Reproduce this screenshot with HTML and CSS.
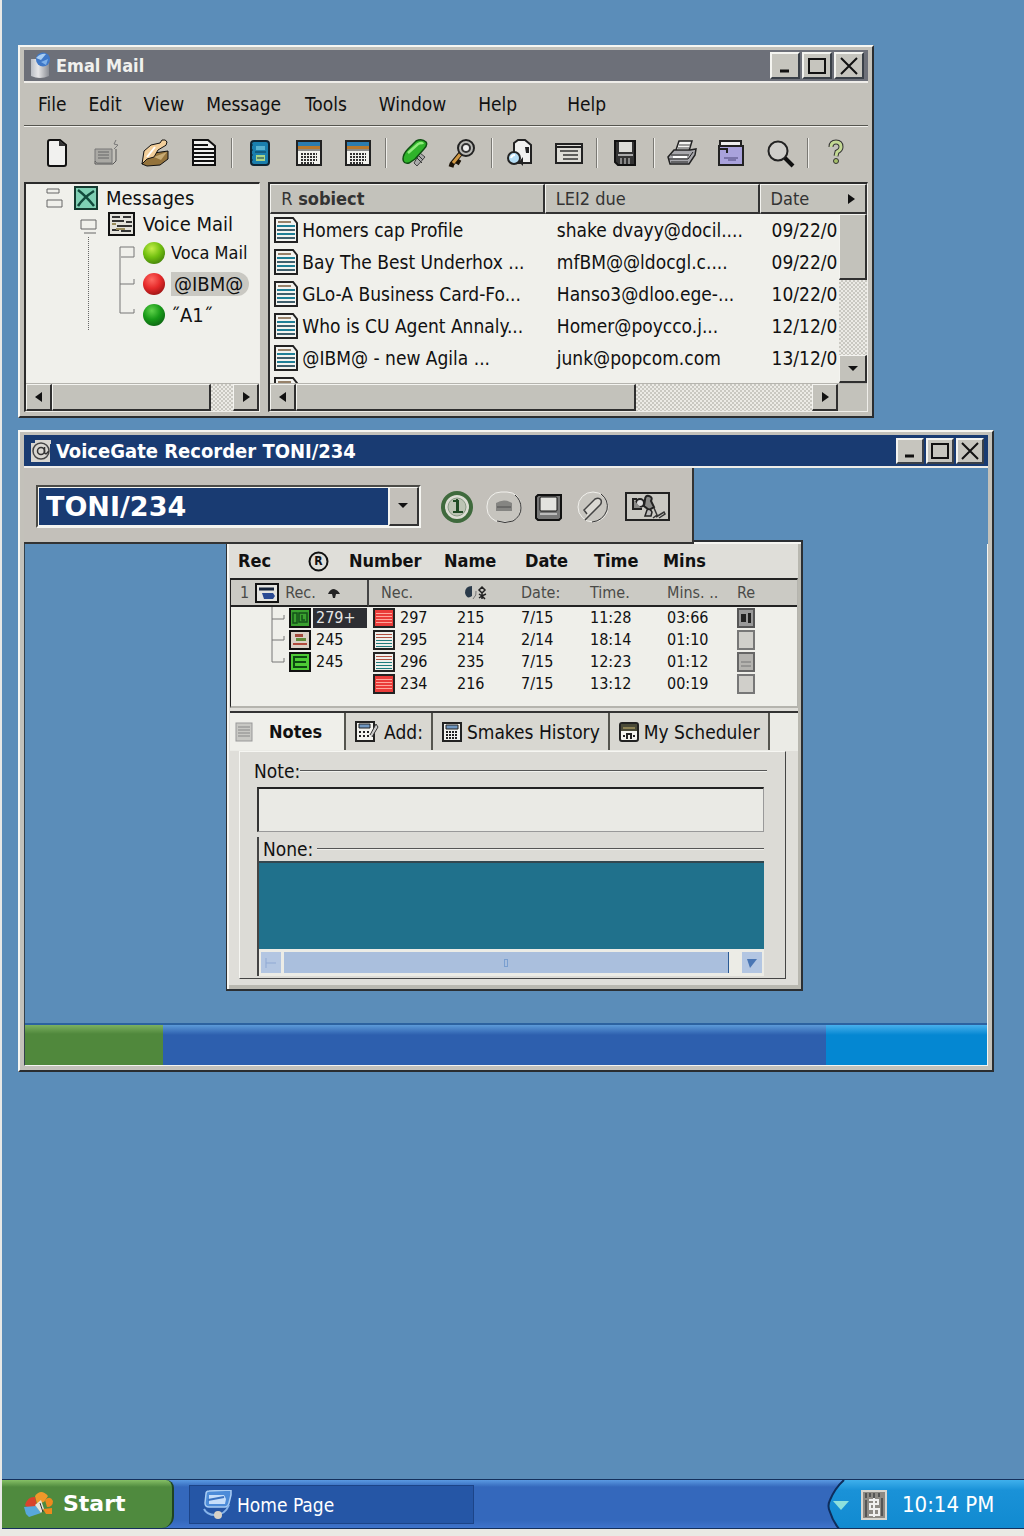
FILE: index.html
```html
<!DOCTYPE html>
<html lang="en">
<head>
<meta charset="utf-8">
<meta name="viewport" content="width=device-width, initial-scale=1">
<title>Desktop</title>
<link rel="stylesheet" href="styles.css">
</head>
<body>
<svg class="defs" width="0" height="0" aria-hidden="true">
  <defs>
    <linearGradient id="can" x1="0" x2="1" y1="0" y2="0"><stop offset="0" stop-color="#b9bdc4"/><stop offset=".4" stop-color="#e6e6e8"/><stop offset="1" stop-color="#8a8d94"/></linearGradient>
    <radialGradient id="lime" cx=".4" cy=".3" r=".8"><stop offset="0" stop-color="#c4ee4a"/><stop offset=".5" stop-color="#72c010"/><stop offset="1" stop-color="#3d7a08"/></radialGradient>
    <radialGradient id="red" cx=".4" cy=".3" r=".8"><stop offset="0" stop-color="#ff6a62"/><stop offset=".5" stop-color="#e62a2a"/><stop offset="1" stop-color="#8f1010"/></radialGradient>
    <radialGradient id="green" cx=".4" cy=".3" r=".8"><stop offset="0" stop-color="#5fd24a"/><stop offset=".5" stop-color="#189a18"/><stop offset="1" stop-color="#0b5c12"/></radialGradient>
    <linearGradient id="tray" x1="0" x2="0" y1="0" y2="1"><stop offset="0" stop-color="#3fb0ec"/><stop offset=".2" stop-color="#1a92d8"/><stop offset="1" stop-color="#118ad0"/></linearGradient>
  </defs>
  <symbol id="i-mail" viewBox="0 0 22 28"><path d="M1 7h18v17q-9 4-18 0z" fill="url(#can)"/><circle cx="13" cy="7.500" r="7" fill="#3f78c8"/><path d="M6 6q5-5 10-4l-5 6z" fill="#a9cdf2"/><path d="M11 10l7-3-2 6z" fill="#7db0ea"/></symbol>
  <symbol id="i-new" viewBox="0 0 30 30"><path d="M7 2h10l6 5v19q0 2-2 2H7q-2 0-2-2V4q0-2 2-2z" fill="#f1f1ef" stroke="#111" stroke-width="2"/><path d="M16 2v6h7" fill="#333"/></symbol>
  <symbol id="i-send" viewBox="0 0 30 30"><path d="M4 11h17v14H6l-2-2z" fill="#aaa9a4" stroke="#777"/><path d="M4 23v3h18l3-3V11" fill="none" stroke="#555"/><path d="M7 14h11M7 17h11M7 20h11" stroke="#666"/><path d="M23 11l4-4-4-1 2-4" fill="none" stroke="#777"/></symbol>
  <symbol id="i-open" viewBox="0 0 30 30"><path d="M2 26l4-9 8-2 14-2v8l-8 6-13 1z" fill="#94733c" stroke="#111"/><path d="M2 26L4 13l7-6 9-2 2-3q4-1 5 2 0 4-4 5l-5 3-4 7-7 2z" fill="#f3cf9b" stroke="#111"/><path d="M14 19l13-5-6 8z" fill="#c8ab74"/><path d="M7 19l8-10" stroke="#fff" stroke-width="2"/></symbol>
  <symbol id="i-doc" viewBox="0 0 30 30"><path d="M4 2h15l7 6v19H4z" fill="#f1f1ef" stroke="#111" stroke-width="2"/><path d="M5 7h14M5 11h20M5 15h20M5 19h20M5 23h20" stroke="#111" stroke-width="2"/></symbol>
  <symbol id="i-book" viewBox="0 0 30 30"><rect x="6" y="3" width="18" height="24" rx="3" fill="#1a7fae" stroke="#0f2433" stroke-width="2"/><path d="M5 7h3M5 12h3M5 17h3M5 22h3" stroke="#0f2433"/><path d="M11 8h9v4h-9z" fill="#58b2d0"/><path d="M11 17h9v6h-9z" fill="#a8d487"/><path d="M10 14h11M12 20h7" stroke="#0c3a52"/></symbol>
  <symbol id="i-cal" viewBox="0 0 30 30"><rect x="3" y="3" width="24" height="24" fill="#f2f2ee" stroke="#222" stroke-width="2"/><path d="M4 4h22v4H4z" fill="#2b7cb0"/><path d="M4 8h22v3H4z" fill="#b8792e"/><path d="M4 12h22" stroke="#222"/><path d="M7 16h16M7 19h16M7 22h16M7 25h13" stroke="#333" stroke-width="2" stroke-dasharray="2 1"/></symbol>
  <symbol id="i-pen" viewBox="0 0 30 30"><path d="M14 25l6-10 5 4-8 9z" fill="#aaa" stroke="#444"/><path d="M17 20l5 5M19 18l4 4" stroke="#333"/><path d="M3 21q0-5 5-10l8-8q6-3 10 1 2 3-2 7l-9 10-6 4q-6 1-6-4z" fill="#2fb32a" stroke="#0f4f12" stroke-width="1.500"/><path d="M8 15L18 6q4-2 5 0" fill="none" stroke="#90ec7c" stroke-width="2.500"/></symbol>
  <symbol id="i-key" viewBox="0 0 30 30"><path d="M13 15L4 26l-1 3M7 22l5 3" stroke="#1b1206" stroke-width="5" fill="none"/><path d="M14 14L5 25" stroke="#d29a45" stroke-width="3"/><circle cx="18" cy="10" r="8" fill="#b9b9b5" stroke="#222" stroke-width="2"/><circle cx="18" cy="10" r="4" fill="#eee" stroke="#333" stroke-width="2"/></symbol>
  <symbol id="i-find" viewBox="0 0 30 30"><path d="M9 5l4-3h7l6 5v18H9z" fill="#f1f1ef" stroke="#222" stroke-width="2"/><path d="M20 9h4v6h-3zM14 24l4-5v9" fill="#222"/><circle cx="9" cy="20" r="6" fill="#b6def5" stroke="#222" stroke-width="2"/><path d="M6 20q1-3 4-3" fill="none" stroke="#fff" stroke-width="2"/></symbol>
  <symbol id="i-list" viewBox="0 0 30 30"><rect x="2" y="6" width="26" height="19" fill="#dddcd6" stroke="#222" stroke-width="2"/><path d="M3 9h24" stroke="#222" stroke-width="2"/><path d="M6 13h18M9 17h15M9 21h15" stroke="#333" stroke-width="1.500"/></symbol>
  <symbol id="i-save" viewBox="0 0 30 30"><path d="M5 3h20v24H8l-3-3z" fill="#333" stroke="#111" stroke-width="2"/><rect x="9" y="4" width="13" height="10" fill="#dcdcd8"/><path d="M8 17h15" stroke="#aaa" stroke-width="2"/><path d="M11 20v6M15 20v6M19 20v6" stroke="#888" stroke-width="2"/></symbol>
  <symbol id="i-print" viewBox="0 0 30 30"><path d="M9 12l3-9h13l-3 10" fill="#f4f4f1" stroke="#222" stroke-width="1.500"/><path d="M12 7h11M11 10h11" stroke="#444"/><path d="M1 19l6-7h16l6-1-1 6-6 9H3z" fill="#a7a7ac" stroke="#222" stroke-width="1.500"/><path d="M4 17h18M2 21h19l5-7M4 24h17" stroke="#222" fill="none"/><path d="M6 19h14" stroke="#fff" stroke-width="2"/></symbol>
  <symbol id="i-folder" viewBox="0 0 30 30"><path d="M4 8V3h21v5" fill="#eee" stroke="#222" stroke-width="2"/><rect x="3" y="8" width="24" height="19" fill="#a9a2dc" stroke="#222" stroke-width="2"/><path d="M3 11h8v4" fill="none" stroke="#222" stroke-width="2"/><path d="M8 20h14M12 22h8" stroke="#4a4478"/></symbol>
  <symbol id="i-lens" viewBox="0 0 30 30"><circle cx="13" cy="13" r="9.500" fill="#cfceca" stroke="#222" stroke-width="2"/><path d="M20 20l8 8" stroke="#111" stroke-width="4"/></symbol>
  <symbol id="i-help" viewBox="0 0 30 30"><path d="M10 9q0-5 5-5t5 5q0 3-4 5l-1 4" fill="none" stroke="#333" stroke-width="5"/><path d="M10 9q0-5 5-5t5 5q0 3-4 5l-1 4" fill="none" stroke="#c3d894" stroke-width="3"/><circle cx="15" cy="23" r="2.500" fill="#a6c06a" stroke="#333"/></symbol>
  <symbol id="i-min" viewBox="0 0 20 20"><path d="M5 15h9" stroke="#111" stroke-width="3"/></symbol>
  <symbol id="i-max" viewBox="0 0 20 20"><path d="M2 3h16v14H2z" fill="none" stroke="#111" stroke-width="2"/></symbol>
  <symbol id="i-close" viewBox="0 0 20 20"><path d="M2 2l16 16M18 2L2 18" stroke="#111" stroke-width="2"/></symbol>
  <symbol id="i-left" viewBox="0 0 8 10"><path d="M7 0v10L0 5z" fill="#111"/></symbol>
  <symbol id="i-right" viewBox="0 0 8 10"><path d="M1 0v10l7-5z" fill="#111"/></symbol>
  <symbol id="i-down" viewBox="0 0 10 8"><path d="M0 1h10L5 6z" fill="#111"/></symbol>
  <symbol id="i-msg" viewBox="0 0 24 26"><path d="M1 1h18l4 5v19H1z" fill="#f4f4f0" stroke="#222" stroke-width="2"/><path d="M4 5h13" stroke="#97826a" stroke-width="2"/><path d="M3 9h18M3 17h18" stroke="#1f7f96" stroke-width="2"/><path d="M3 13h18M3 21h18" stroke="#3f5f6c" stroke-width="2"/></symbol>
  <symbol id="i-stripe-red" viewBox="0 0 22 20"><rect x="1" y="1" width="20" height="18" fill="#ea3c3a" stroke="#222" stroke-width="2"/><path d="M3 5.500h16M3 8.500h16M3 11.500h16M3 14.500h16" stroke="#ffa79c"/></symbol>
  <symbol id="i-stripe" viewBox="0 0 22 20"><rect x="1" y="1" width="20" height="18" fill="#efefeb" stroke="#222" stroke-width="2"/><path d="M3 4.500h16M3 7.500h16" stroke="#b0503f"/><path d="M3 10.500h16M3 13.500h16M3 16.500h16" stroke="#1f7a7c"/></symbol>
  <symbol id="i-board" viewBox="0 0 22 20"><rect x="1" y="1" width="20" height="18" fill="#3aa02f" stroke="#111" stroke-width="2"/><path d="M4 5h4v10H4zM10 5h8v9h-8zM13 7v5h3" fill="none" stroke="#14501a" stroke-width="1.500"/></symbol>
  <symbol id="i-pic" viewBox="0 0 22 20"><rect x="1" y="1" width="20" height="18" fill="#d9d1c6" stroke="#111" stroke-width="2"/><path d="M6 4h8v3H6z" fill="#a34a3c"/><path d="M7 8h10v3H7z" fill="#5f8a3a"/><path d="M4 14h14" stroke="#b04a3c" stroke-width="2"/></symbol>
  <symbol id="i-card" viewBox="0 0 22 20"><rect x="1" y="1" width="20" height="18" fill="#4ecb35" stroke="#111" stroke-width="2"/><path d="M18 5H5v10h13M5 10h12" fill="none" stroke="#0c4a10" stroke-width="2"/></symbol>
  <symbol id="i-sheet" viewBox="0 0 20 20"><rect x="2" y="1" width="16" height="18" fill="#c8c8c4" stroke="#999"/><path d="M4 5h12M4 8h12M4 11h12M4 14h12" stroke="#888"/></symbol>
  <symbol id="i-calc" viewBox="0 0 20 20"><rect x="1" y="1" width="18" height="18" fill="#f3f3ef" stroke="#222" stroke-width="2"/><path d="M4 3h12v4H4z" fill="#6f96c0" stroke="#222"/><path d="M4 10h12M4 13h12M4 16h12" stroke="#222" stroke-width="2" stroke-dasharray="2 1"/></symbol>
  <symbol id="i-sched" viewBox="0 0 20 20"><rect x="1" y="1" width="18" height="18" rx="2" fill="#f3f3ef" stroke="#222" stroke-width="2"/><path d="M2 2h16v7H2z" fill="#4a4a38"/><path d="M4 5h12v2H4z" fill="#8d8254"/><path d="M8 17v-5h4v5M4 14h2M14 14h2" fill="none" stroke="#222" stroke-width="2"/></symbol>
</svg>

<main class="desktop">
  <section class="window mail" aria-label="Emal Mail">
    <header class="titlebar titlebar-gray">
      <svg class="title-icon" width="22" height="28"><use href="#i-mail"/></svg>
      <h1 class="title title-small">Emal Mail</h1>
      <div class="win-buttons">
        <button class="win-btn" aria-label="Minimize"><svg width="20" height="20"><use href="#i-min"/></svg></button>
        <button class="win-btn" aria-label="Maximize"><svg width="20" height="20"><use href="#i-max"/></svg></button>
        <button class="win-btn" aria-label="Close"><svg width="20" height="20"><use href="#i-close"/></svg></button>
      </div>
    </header>
    <nav class="menubar">
      <div class="menus">
        <button class="menu">File</button><button class="menu">Edit</button><button class="menu">View</button><button class="menu">Message</button>
      </div>
      <div class="menus menus-wide">
        <button class="menu">Tools</button><button class="menu">Window</button><button class="menu">Help</button><button class="menu menu-last">Help</button>
      </div>
    </nav>
    <div class="toolbar">
      <button class="tool" aria-label="New"><svg><use href="#i-new"/></svg></button>
      <button class="tool" aria-label="Send"><svg><use href="#i-send"/></svg></button>
      <button class="tool" aria-label="Open"><svg><use href="#i-open"/></svg></button>
      <button class="tool" aria-label="Document"><svg><use href="#i-doc"/></svg></button>
      <span class="sep"></span>
      <button class="tool" aria-label="Address book"><svg><use href="#i-book"/></svg></button>
      <button class="tool" aria-label="Calendar"><svg><use href="#i-cal"/></svg></button>
      <button class="tool" aria-label="Schedule"><svg><use href="#i-cal"/></svg></button>
      <span class="sep"></span>
      <button class="tool" aria-label="Mark"><svg><use href="#i-pen"/></svg></button>
      <button class="tool" aria-label="Key"><svg><use href="#i-key"/></svg></button>
      <span class="sep"></span>
      <button class="tool" aria-label="Preview"><svg><use href="#i-find"/></svg></button>
      <button class="tool" aria-label="List"><svg><use href="#i-list"/></svg></button>
      <span class="sep"></span>
      <button class="tool" aria-label="Save"><svg><use href="#i-save"/></svg></button>
      <span class="sep"></span>
      <button class="tool" aria-label="Print"><svg><use href="#i-print"/></svg></button>
      <button class="tool" aria-label="Folder"><svg><use href="#i-folder"/></svg></button>
      <button class="tool" aria-label="Search"><svg><use href="#i-lens"/></svg></button>
      <span class="sep"></span>
      <button class="tool" aria-label="Help"><svg><use href="#i-help"/></svg></button>
    </div>
    <div class="panes">
      <div class="pane tree-pane">
        <ul class="tree">
          <li>
            <div class="node">
              <svg width="18" height="22"><path d="M1 2h12v4H1zM1 13h15v7H1z" fill="none" stroke="#666"/></svg>
              <svg class="node-box" width="24" height="24"><path d="M1 1h22v22H1z" fill="#7fd0b4" stroke="#153a30" stroke-width="2"/><path d="M4 4q8 6 16 16M20 5Q9 12 4 20" fill="none" stroke="#124a3c" stroke-width="2.500"/></svg>
              <span>Messages</span>
            </div>
            <ul class="subtree">
              <li>
                <div class="node">
                  <svg width="18" height="22"><path d="M1 7h15v9H1zM4 20h12" fill="none" stroke="#666"/></svg>
                  <svg class="node-box" width="27" height="24"><path d="M1 1h25v22H1z" fill="#e3e2db" stroke="#111" stroke-width="2"/><path d="M4 5h8M15 5h8M4 9h12M18 10h6M9 14h15M4 18h7M13 19h10" stroke="#333" stroke-width="2"/><path d="M4 12h4M8 17h9" stroke="#9a8d5d" stroke-width="2"/></svg>
                  <span>Voice Mail</span>
                </div>
                <ul class="leaves">
                  <li class="leaf"><svg width="18" height="31"><path d="M1 31V10h14v10H2" fill="none" stroke="#777"/></svg><svg class="ball" width="24" height="24"><circle cx="12" cy="12" r="11" fill="url(#lime)"/></svg><span class="leaf-small">Voca Mail</span></li>
                  <li class="leaf"><svg width="18" height="31"><path d="M1 0v31M1 16h14v-5" fill="none" stroke="#777"/></svg><svg class="ball" width="24" height="24"><circle cx="12" cy="12" r="11" fill="url(#red)"/></svg><span class="picked">@IBM@</span></li>
                  <li class="leaf"><svg width="18" height="31"><path d="M1 0v14h14v-4" fill="none" stroke="#777"/></svg><svg class="ball" width="24" height="24"><circle cx="12" cy="12" r="11" fill="url(#green)"/></svg><span>˝A1˝</span></li>
                </ul>
              </li>
            </ul>
          </li>
        </ul>
        <div class="hscroll">
          <button class="scroll-btn" aria-label="Scroll left"><svg width="8" height="10"><use href="#i-left"/></svg></button>
          <span class="thumb tree-thumb"></span>
          <span class="track"></span>
          <button class="scroll-btn" aria-label="Scroll right"><svg width="8" height="10"><use href="#i-right"/></svg></button>
        </div>
      </div>
      <div class="pane list-pane">
        <div class="list-view">
          <table class="messages">
            <colgroup><col class="c-subject"><col class="c-from"><col class="c-date"></colgroup>
            <thead><tr><th><span class="light">R</span> sobiect</th><th class="thin">LEI2 due</th><th class="thin"><div class="date-head">Date <svg width="8" height="10"><use href="#i-right"/></svg></div></th></tr></thead>
            <tbody>
              <tr><td><div class="subject"><svg width="24" height="26"><use href="#i-msg"/></svg>Homers cap Profile</div></td><td>shake dvayy@docil....</td><td>09/22/0</td></tr>
              <tr><td><div class="subject"><svg width="24" height="26"><use href="#i-msg"/></svg>Bay The Best Underhox ...</div></td><td>mfBM@@ldocgl.c....</td><td>09/22/0</td></tr>
              <tr><td><div class="subject"><svg width="24" height="26"><use href="#i-msg"/></svg>GLo-A Business Card-Fo...</div></td><td>Hanso3@dloo.ege-...</td><td>10/22/0</td></tr>
              <tr><td><div class="subject"><svg width="24" height="26"><use href="#i-msg"/></svg>Who is CU Agent Annaly...</div></td><td>Homer@poycco.j...</td><td>12/12/0</td></tr>
              <tr><td><div class="subject"><svg width="24" height="26"><use href="#i-msg"/></svg>@IBM@ - new Agila ...</div></td><td>junk@popcom.com</td><td>13/12/0</td></tr>
              <tr><td><div class="subject"><svg width="24" height="26"><use href="#i-msg"/></svg></div></td><td></td><td></td></tr>
            </tbody>
          </table>
          <div class="vscroll">
            <span class="thumb v-thumb"></span>
            <span class="track"></span>
            <button class="scroll-btn v-btn" aria-label="Scroll down"><svg width="10" height="8"><use href="#i-down"/></svg></button>
          </div>
        </div>
        <div class="hscroll">
          <button class="scroll-btn" aria-label="Scroll left"><svg width="8" height="10"><use href="#i-left"/></svg></button>
          <span class="thumb list-thumb"></span>
          <span class="track"></span>
          <button class="scroll-btn" aria-label="Scroll right"><svg width="8" height="10"><use href="#i-right"/></svg></button>
          <span class="corner"></span>
        </div>
      </div>
    </div>
  </section>

  <section class="window recorder" aria-label="VoiceGate Recorder">
    <header class="titlebar titlebar-navy">
      <svg class="title-icon" width="22" height="24"><path d="M1 4h4V1h16v4h-1v18H1z" fill="#d8d6d0"/><circle cx="11" cy="12" r="8" fill="none" stroke="#444" stroke-width="1.500"/><circle cx="11" cy="12" r="3.500" fill="none" stroke="#333" stroke-width="1.500"/><path d="M14.500 8v6q2 2 4-2" fill="none" stroke="#333" stroke-width="1.500"/></svg>
      <h2 class="title">VoiceGate Recorder TONI/234</h2>
      <div class="win-buttons">
        <button class="win-btn" aria-label="Minimize"><svg width="20" height="20"><use href="#i-min"/></svg></button>
        <button class="win-btn" aria-label="Maximize"><svg width="20" height="20"><use href="#i-max"/></svg></button>
        <button class="win-btn" aria-label="Close"><svg width="20" height="20"><use href="#i-close"/></svg></button>
      </div>
    </header>
    <div class="rec-body">
      <div class="rec-bar">
        <label class="combo">
          <select class="combo-select" aria-label="Line"><option>TONI/234</option></select>
          <span class="combo-arrow"><svg width="12" height="8" viewBox="0 0 10 8"><use href="#i-down"/></svg></span>
        </label>
        <div class="rec-tools">
          <button class="rec-tool" aria-label="Info"><svg width="34" height="34"><circle cx="17" cy="17" r="14" fill="#dcddd4" stroke="#3f6a3d" stroke-width="4"/><circle cx="17" cy="17" r="9" fill="#bcc4b4" stroke="#8a9a86"/><path d="M13 11h5v11M13 22h10M17 9v13" fill="none" stroke="#1f4a24" stroke-width="2"/></svg></button>
          <button class="rec-tool" aria-label="Hold"><svg width="38" height="34"><rect x="2" y="2" width="34" height="30" rx="14" fill="#c6c4be" stroke="#f1f0ec"/><path d="M30 5q6 5 6 13t-8 13q-8 3-16 0" fill="none" stroke="#333"/><path d="M11 13q8-5 16 0v8H11z" fill="#858582"/><path d="M12 17h14" stroke="#4f4f4f"/></svg></button>
          <button class="rec-tool" aria-label="Monitor"><svg width="30" height="30"><path d="M4 3h23v23l-2 2H4l-2-2V5z" fill="#777" stroke="#111" stroke-width="2"/><rect x="6" y="5" width="17" height="14" rx="1" fill="#e3e3df" stroke="#111"/><path d="M6 22h17" stroke="#bbb" stroke-width="2"/></svg></button>
          <button class="rec-tool" aria-label="Edit"><svg width="36" height="34"><circle cx="18" cy="17" r="15" fill="#c8c6c0" stroke="#f1f0ec"/><path d="M26 4q8 6 6 16-4 11-15 12" fill="none" stroke="#333"/><path d="M12 24L9 20 20 9q4-2 6 1 1 3-1 5L15 25l-5 5" fill="#dcdad4" stroke="#444" stroke-width="1.500"/></svg></button>
          <button class="rec-tool" aria-label="Contacts"><svg width="46" height="30"><path d="M1 1h43v27H1z" fill="#cac9c3" stroke="#222" stroke-width="2"/><circle cx="15" cy="11" r="4" fill="#ddd" stroke="#222" stroke-width="2"/><path d="M7 7h5M8 7v10h9M20 8q0-5 4-4 4 1 2 5l3 6-5 3-5-4z" fill="#8a8a88" stroke="#222" stroke-width="2"/><path d="M22 18q3-2 5 2l-1 4h-6z" fill="#bbb" stroke="#222" stroke-width="1.500"/><path d="M29 16l3 7-4 3M31 25l8-5 1 2-6 4" fill="none" stroke="#333" stroke-width="1.500"/></svg></button>
        </div>
      </div>
      <div class="canvas">
        <div class="dialog">
          <div class="dialog-head">
            <span>Rec</span><span class="reg"><svg width="21" height="21"><circle cx="10.500" cy="10.500" r="9" fill="none" stroke="#111" stroke-width="2"/></svg><b>R</b></span><span>Number</span><span>Name</span><span>Date</span><span>Time</span><span>Mins</span>
          </div>
          <div class="calls-box">
            <table class="calls">
              <colgroup><col class="k-rec"><col class="k-num"><col class="k-name"><col class="k-date"><col class="k-time"><col class="k-mins"><col></colgroup>
              <thead><tr>
                <th class="split"><div class="rec-head"><span>1</span><svg width="24" height="20"><path d="M1 1h22v18H1z" fill="#e4e4e0" stroke="#111" stroke-width="2"/><path d="M4 6h15" stroke="#15233a" stroke-width="3"/><path d="M7 10h11l2 3-2 3H9z" fill="#2a4a94"/></svg><span>Rec.</span><svg width="12" height="12"><path d="M0 7q2-5 6-5 4 1 6 5H8l-1 4H5L4 7z" fill="#222"/></svg></div></th>
                <th class="nec">Nec.</th>
                <th><svg class="name-icon" width="24" height="16"><path d="M2 8q0-7 7-7v10q-5 4-7-3z" fill="#2a3a4a"/><path d="M10 14q4-4 3-8" fill="none" stroke="#777"/><path d="M19 2l3 3-3 3-3-3zM19 8v6M16 9l3 2 4-2M16 13l3-2 3 3" fill="none" stroke="#222" stroke-width="1.500"/></svg></th>
                <th>Date:</th><th>Time.</th><th>Mins. ..</th><th>Re</th>
              </tr></thead>
              <tbody>
                <tr><td><div class="rec"><svg width="16" height="22"><path d="M1 0v22M1 12h12V8" fill="none" stroke="#777"/></svg><svg width="24" height="20" viewBox="0 0 22 20"><use href="#i-board"/></svg><span class="hot">279+</span></div></td><td><div class="num"><svg width="22" height="20"><use href="#i-stripe-red"/></svg>297</div></td><td>215</td><td>7/15</td><td>11:28</td><td>03:66</td><td><svg class="re" width="18" height="20"><path d="M1 1h16v18H1z" fill="#999" stroke="#555" stroke-width="2"/><path d="M4 6h5v8H4zM11 5h3v10h-3z" fill="#222"/></svg></td></tr>
                <tr><td><div class="rec"><svg width="16" height="22"><path d="M1 0v22M1 11h12V7" fill="none" stroke="#777"/></svg><svg width="24" height="20" viewBox="0 0 22 20"><use href="#i-pic"/></svg><span>245</span></div></td><td><div class="num"><svg width="22" height="20"><use href="#i-stripe"/></svg>295</div></td><td>214</td><td>2/14</td><td>18:14</td><td>01:10</td><td><svg class="re" width="18" height="20"><path d="M1 1h16v18H1z" fill="#d0cfca" stroke="#777" stroke-width="2"/></svg></td></tr>
                <tr><td><div class="rec"><svg width="16" height="22"><path d="M1 0v11h12V7" fill="none" stroke="#777"/></svg><svg width="24" height="20" viewBox="0 0 22 20"><use href="#i-card"/></svg><span>245</span></div></td><td><div class="num"><svg width="22" height="20"><use href="#i-stripe"/></svg>296</div></td><td>235</td><td>7/15</td><td>12:23</td><td>01:12</td><td><svg class="re" width="18" height="20"><path d="M1 1h16v18H1z" fill="#b5b4b0" stroke="#666" stroke-width="2"/><path d="M4 10h10M4 14h10" stroke="#777"/></svg></td></tr>
                <tr><td></td><td><div class="num"><svg width="22" height="20"><use href="#i-stripe-red"/></svg>234</div></td><td>216</td><td>7/15</td><td>13:12</td><td>00:19</td><td><svg class="re" width="18" height="20"><path d="M1 1h16v18H1z" fill="#d0cfca" stroke="#777" stroke-width="2"/></svg></td></tr>
              </tbody>
            </table>
          </div>
          <div class="tabs" role="tablist">
            <button class="tab tab-active" role="tab" aria-selected="true"><svg width="20" height="20"><use href="#i-sheet"/></svg>Notes</button>
            <button class="tab" role="tab"><svg width="24" height="22"><path d="M1 1h18v19H1z" fill="#f3f3ef" stroke="#222" stroke-width="2"/><path d="M4 3h11v4H4z" fill="#6f96c0" stroke="#222"/><path d="M4 11h11M4 15h11" stroke="#222" stroke-width="2" stroke-dasharray="2 2"/><path d="M15 14l6-11 2 3-6 10" fill="#ccc" stroke="#333"/></svg>Add:</button>
            <button class="tab" role="tab"><svg width="20" height="22" viewBox="0 0 20 20"><use href="#i-calc"/></svg>Smakes History</button>
            <button class="tab" role="tab"><svg width="20" height="22" viewBox="0 0 20 20"><use href="#i-sched"/></svg>My Scheduler</button>
          </div>
          <div class="panel">
            <div class="legend"><label for="note">Note:</label><span class="rule"></span></div>
            <input class="note" id="note" type="text">
            <div class="group">
              <div class="legend legend-inner"><label for="none">None:</label><span class="rule"></span></div>
              <textarea class="none" id="none"></textarea>
              <div class="soft-scroll">
                <button class="soft-btn" aria-label="Scroll left"><svg width="12" height="10"><path d="M1 0v10M1 5h10" stroke="#8fa9d4"/></svg></button>
                <span class="soft-thumb"><i class="grip"></i></span>
                <button class="soft-btn" aria-label="Scroll right"><svg width="12" height="10"><path d="M1 1h10L4 10z" fill="#4a76b4"/></svg></button>
              </div>
            </div>
          </div>
        </div>
        <div class="strip"><span class="strip-start"></span><span class="strip-mid"></span><span class="strip-tray"></span></div>
      </div>
    </div>
  </section>
</main>

<footer class="taskbar">
  <button class="start"><svg width="32" height="28"><path d="M2 15q3-9 10-8l2 9-8 3z" fill="#d8432c"/><path d="M12 6q6-8 13 0l-4 6-7 2z" fill="#f0982a"/><path d="M1 17l12-1 5 7-12 4-3-3z" fill="#58a8dc"/><path d="M12 15l6-5 3 9-3 4z" fill="#e8e4dc"/><path d="M22 10q5-5 8 1 0 6-6 6zM20 19l9-1v6h-6z" fill="#ee8a1e"/><path d="M17 13l3 9" stroke="#333"/></svg>Start</button>
  <button class="task"><svg width="32" height="30"><path d="M5 4q0-3 3-3l22-1v5l-2 8q-1 4-4 4H8q-4 0-4-4z" fill="#4c8bd8" stroke="#a9cdf4" stroke-width="1.500"/><path d="M8 5h15l2 4-1 5H8z" fill="#c6defa"/><path d="M7 10l16-3" stroke="#3a72c0" stroke-width="2"/><path d="M3 19q3 6 11 6 10 0 14-10" fill="none" stroke="#86b4ea" stroke-width="2"/><circle cx="17" cy="25" r="4" fill="#d8d2c6"/></svg>Home Page</button>
  <div class="tray">
    <svg class="tray-edge" width="22" height="50"><path d="M22 0H17Q8 8 3 20q-3 6 0 12 3 10 10 18h9z" fill="url(#tray)"/><path d="M17 0Q8 8 3 20q-3 6 0 12 3 10 10 18" fill="none" stroke="#0e2d5c" stroke-width="2"/></svg>
    <div class="tray-body">
      <svg class="tray-arrow" width="16" height="9"><path d="M0 0h16L8 9z" fill="#8ee0dc"/></svg>
      <svg class="tray-icon" width="26" height="30"><path d="M1 1h24v28H1z" fill="#8d8a85" stroke="#d8d6d0" stroke-width="2"/><path d="M5 3v5M9 3v4M13 3v5M18 3v4M5 10v17M21 8v18" stroke="#555" stroke-width="2"/><path d="M8 10h9v4H9v5h9v6H8M13 8v19" fill="none" stroke="#efefef" stroke-width="2"/></svg>
      <span>10:14 PM</span>
    </div>
  </div>
</footer>
</body>
</html>
```
FILE: styles.css
```css
* { box-sizing: border-box; }

body {
  margin: 0;
  min-height: 100vh;
  display: flex;
  flex-direction: column;
  border-left: 2px solid #e9e9e6;
  border-bottom: 7px solid #e9e9e4;
  background: #5b8db9;
  color: #111;
  font: 19px/24px "DejaVu Sans Condensed", "DejaVu Sans", sans-serif;
}

button, input, select, textarea {
  margin: 0;
  padding: 0;
  border: 0;
  border-radius: 0;
  background: none;
  color: inherit;
  font: inherit;
}

ul { margin: 0; padding: 0; list-style: none; }
svg { display: block; flex: none; }
.defs { position: absolute; }

.desktop {
  flex: 1;
  display: flex;
  flex-direction: column;
  gap: 12px;
  padding: 45px 30px 24px 16px;
}

/* Windows */
.window {
  padding: 3px 4px 4px;
  border: 2px solid;
  border-color: #f6f6f2 #2a2d30 #2a2d30 #f6f6f2;
  background: #c3c1ba;
}

.mail { margin-right: 120px; }

.titlebar {
  display: flex;
  align-items: center;
  gap: 4px;
  height: 33px;
  padding: 0 4px 0 6px;
  border-bottom: 2px solid #efede9;
  color: #fff;
}

.titlebar-gray { background: #6d7079; }
.titlebar-navy { background: #193b72; }
.title { flex: 1; margin: 0; font-size: 20px; line-height: 24px; }
.title-small { font-size: 18px; color: #f1f1ee; }
.win-buttons { display: flex; gap: 2px; }

.win-btn {
  display: grid;
  place-items: center;
  width: 30px;
  height: 27px;
  border: 2px solid;
  border-color: #f4f4f0 #3a4048 #3a4048 #f4f4f0;
  background: #c6c5be;
}

.recorder .win-btn { width: 28px; height: 26px; }

/* Menu bar and toolbar */
.menubar {
  display: flex;
  gap: 24px;
  height: 43px;
  padding-left: 14px;
  align-items: center;
  border-bottom: 1px solid #55554f;
}

.menus { display: flex; gap: 22px; }
.menus-wide { gap: 32px; }
.menu-last { margin-left: 18px; }

.toolbar {
  display: flex;
  align-items: center;
  justify-content: space-between;
  height: 52px;
  padding: 0 10px 0 12px;
  border-top: 1px solid #f1f0ec;
}

.tool { display: grid; place-items: center; width: 43px; height: 32px; }
.tool svg { width: 30px; height: 30px; }
.sep { width: 2px; height: 30px; border-left: 1px solid #7a7974; border-right: 1px solid #efeeea; }

/* Folder tree and message list */
.panes { display: flex; gap: 8px; padding-top: 4px; }

.pane {
  display: flex;
  flex-direction: column;
  border: 1px solid;
  border-width: 2px 1px 1px 2px;
  border-color: #2b2b2b #efeeea #efeeea #2b2b2b;
  background: #f0f0eb;
}

.tree-pane { width: 28%; }
.list-pane { flex: 1; min-width: 0; }

.tree { flex: 1; padding: 1px 0 0 20px; font-size: 20px; }
.node { display: flex; align-items: center; height: 26px; }
.node-box { margin: 0 8px 0 10px; }
.subtree { padding-left: 34px; }
.leaves { margin-left: 8px; padding-left: 30px; border-left: 1px dotted #666; }
.leaf { display: flex; align-items: center; gap: 5px; height: 31px; }
.leaf-small { font-size: 18px; }
.picked { padding: 0 6px 0 3px; border-radius: 0 12px 12px 0; background: #c9c8c2; }

.hscroll { display: flex; height: 28px; border-top: 1px solid #b5b4ae; }

.scroll-btn, .thumb {
  border: 1px solid;
  border-width: 1px 2px 2px 1px;
  border-color: #f4f4f0 #2f2f2f #2f2f2f #f4f4f0;
  background: #c3c2bb;
}

.scroll-btn { display: grid; place-items: center; width: 26px; }
.track { flex: 1; background: repeating-conic-gradient(#c9c8c1 0 25%, #ecebe6 0 50%) 0 0 / 4px 4px; }
.tree-thumb { width: 68%; }
.list-thumb { width: 57%; }
.corner { width: 29px; background: #c3c2bb; }

.list-view { position: relative; height: 199px; overflow: hidden; }
.messages { width: 100%; table-layout: fixed; border-collapse: separate; border-spacing: 0; }
.c-subject { width: 46%; }
.c-from { width: 36%; }

.messages th {
  height: 30px;
  padding: 0 10px;
  border: 1px solid;
  border-width: 1px 2px 2px 1px;
  border-color: #f4f4f0 #333 #333 #f4f4f0;
  background: #c3c2bb;
  color: #333;
  font-size: 18px;
  text-align: left;
}

.messages .thin, .light { font-weight: normal; }
.date-head { display: flex; align-items: center; justify-content: space-between; }
.messages td { height: 32px; padding: 0 0 0 12px; white-space: nowrap; overflow: hidden; }
.messages td:first-child { padding-left: 4px; }
.subject { display: flex; align-items: center; gap: 4px; }

.vscroll {
  position: absolute;
  top: 30px;
  right: 0;
  bottom: 0;
  display: flex;
  flex-direction: column;
  width: 28px;
}

.v-thumb { height: 66px; }
.v-btn { width: 28px; height: 28px; }

/* Recorder window */
.rec-body { background: #5b8db9; }

.rec-bar {
  position: relative;
  z-index: 1;
  display: flex;
  align-items: center;
  gap: 19px;
  width: 69.5%;
  height: 76px;
  padding: 3px 21px 0 12px;
  border-right: 2px solid #333;
  border-bottom: 2px solid #333;
  background: #c3c0ba;
}

.combo {
  flex: 1;
  display: flex;
  height: 43px;
  border: 2px solid;
  border-color: #4a4a46 #f4f4f0 #f4f4f0 #4a4a46;
}

.combo-select {
  flex: 1;
  appearance: none;
  padding-left: 7px;
  border: 1px solid #f4f4f0;
  background: #193b72;
  color: #fff;
  font: bold 27px/36px "DejaVu Sans", sans-serif;
}

.combo-arrow {
  display: grid;
  place-items: center;
  width: 30px;
  border: 1px solid;
  border-width: 1px 2px 2px 1px;
  border-color: #f4f4f0 #333 #333 #f4f4f0;
}

.rec-tools { display: flex; align-items: center; gap: 11px; }
.rec-tool:last-child { margin-left: 3px; }

.canvas {
  display: flex;
  flex-direction: column;
  justify-content: space-between;
  min-height: 520px;
  border: 1px solid;
  border-width: 0 1px 1px;
  border-color: #f4f4f0 #f4f4f0 #f4f4f0 #33414d;
}

.dialog {
  margin: -4px 184px 32px 201px;
  padding: 2px 3px 10px;
  border: 2px solid #2b2f33;
  border-width: 2px 2px 2px 1px;
  background: #dfded9;
  box-shadow: inset 2px 2px 0 #f6f6f2, inset -3px -4px 0 #b9b8b0;
}

.dialog-head {
  display: grid;
  grid-template-columns: 70px 41px 95px 81px 69px 69px 1fr;
  align-items: center;
  height: 34px;
  padding: 0 0 0 8px;
  font-size: 18px;
  font-weight: bold;
}

.reg { display: grid; place-items: center start; }
.reg svg, .reg b { grid-area: 1 / 1; }
.reg b { width: 21px; text-align: center; font-size: 12px; }

.calls-box {
  height: 130px;
  border: 2px solid;
  border-width: 2px 1px 2px 1px;
  border-color: #222 #b5b4ae #b5b4ae #222;
  background: #efefea;
}

.calls { width: 100%; table-layout: fixed; border-collapse: separate; border-spacing: 0; font-size: 16px; line-height: 20px; }
.k-rec { width: 138px; }
.k-num { width: 88px; }
.k-name { width: 64px; }
.k-date { width: 69px; }
.k-time { width: 77px; }
.k-mins { width: 70px; }

.calls th {
  height: 27px;
  padding: 0;
  border-bottom: 2px solid #222;
  background: #cbcac4;
  color: #4a4a48;
  font-weight: normal;
  text-align: left;
  white-space: nowrap;
}

.calls .split { border-right: 2px solid #444; }
.calls .nec { padding-left: 12px; }
.calls td { height: 22px; padding: 0; }
.name-icon { margin-left: 6px; }
.rec-head { display: flex; align-items: center; gap: 6px; padding-left: 9px; }
.rec-head svg:last-child { margin-left: 6px; }
.rec { display: flex; align-items: center; height: 22px; padding-left: 40px; gap: 1px; }
.rec span { padding-left: 3px; }
.rec .hot { width: 54px; background: #2d2e33; color: #e6e6e4; }
.num { display: flex; align-items: center; gap: 5px; padding-left: 4px; }

/* Tabs */
.tabs {
  display: flex;
  height: 40px;
  margin-top: 3px;
  border-top: 2px solid #333;
  background: #ebebe6;
}

.tab {
  display: flex;
  align-items: center;
  gap: 5px;
  height: 37px;
  padding: 0 8px 0 9px;
  border-right: 2px solid #55554f;
  background: #d8d7d1;
  white-space: nowrap;
}

.tab-active { gap: 15px; padding: 0 22px 0 4px; background: #efefea; font-size: 18px; font-weight: bold; }

.panel {
  margin: 0 12px 0 9px;
  padding: 7px 18px 2px 14px;
  border: 1px solid;
  border-color: #f6f6f2 #444 #444 #f6f6f2;
  background: #dcdbd6;
}

.legend { display: flex; align-items: center; height: 24px; }
.legend-inner { padding-left: 4px; gap: 4px; }
.rule { flex: 1; height: 2px; border-top: 1px solid #555; border-bottom: 1px solid #f1f1ed; }

.note {
  display: block;
  width: calc(100% - 6px);
  height: 45px;
  margin: 4px 3px 5px;
  padding: 0 6px;
  border: 1px solid;
  border-width: 2px 1px 1px 2px;
  border-color: #222 #999 #999 #333;
  background: #eaeae5;
}

.group { margin: 0 3px; border-left: 2px solid #444; }

.none {
  display: block;
  width: 100%;
  height: 88px;
  border-top: 2px solid #33474f;
  background: #20718c;
  resize: none;
}

.soft-scroll { display: flex; gap: 3px; height: 27px; padding: 3px 2px; background: #ecece6; }
.soft-btn { display: grid; place-items: center; width: 20px; background: #b3c6e2; }
.soft-thumb { flex: 1; display: grid; place-items: center; margin-right: 10px; border-right: 1px solid #2a5a94; background: #aabfdd; }
.grip { width: 4px; height: 8px; border: 1px solid #7a9fd0; }

/* Colour strip at the foot of the recorder canvas */
.strip { display: flex; height: 42px; border-top: 2px solid #2c62a0; }
.strip-start { width: 138px; background: linear-gradient(#7bb060, #50883c 9px); }
.strip-mid { flex: 1; background: linear-gradient(#5c9ad8, #2d5fae 10px); }
.strip-tray { width: 161px; background: linear-gradient(#48b0ec, #0487d2 10px); }

/* Taskbar */
.taskbar {
  display: flex;
  height: 50px;
  border-top: 1px solid #15305c;
  border-bottom: 1px solid #15305c;
  background: linear-gradient(#5a9ae2, #3468bc 7px, #3468bc 40px, #3f74cc);
  color: #fff;
}

.start {
  display: flex;
  align-items: center;
  gap: 8px;
  width: 172px;
  padding-left: 21px;
  border-right: 2px solid #1f4420;
  border-radius: 0 8px 12px 0;
  background: linear-gradient(#86c066, #4f8a3e 7px, #4f8a3e);
  font: bold 22px/28px "DejaVu Sans", sans-serif;
}

.task {
  display: flex;
  align-items: center;
  gap: 4px;
  width: 285px;
  margin: 5px 0 4px 15px;
  padding-left: 11px;
  border: 1px solid #1c4488;
  background: #2556a6;
}

.tray { display: flex; width: 197px; margin-left: auto; }
.tray-edge { height: 48px; }

.tray-body {
  flex: 1;
  display: flex;
  align-items: center;
  padding-top: 2px;
  background: linear-gradient(#3fb0ec, #1a92d8 10px, #118ad0);
  font-size: 22px;
}

.tray-arrow { margin-left: -16px; }
.tray-icon { margin: 0 15px 0 12px; }
```
